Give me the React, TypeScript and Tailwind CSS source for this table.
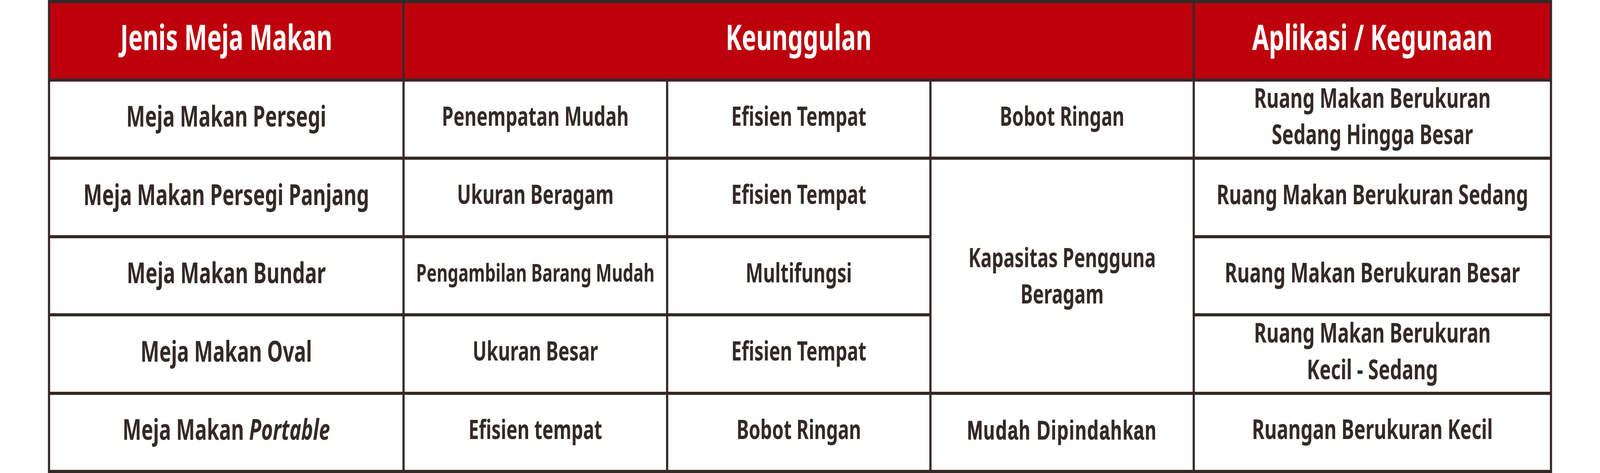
import React, { useEffect, useState } from "react";

const DESIGN_W = 5876;

const cell =
  "bg-white flex items-center justify-center text-center text-[#332a28] font-bold leading-[1.33] pb-[18px]";
const head =
  "bg-[#bd000b] flex items-center justify-center text-center text-white font-bold text-[89px] leading-none pb-[23px]";

function useFitScale() {
  const read = () => (typeof window !== "undefined" ? window.innerWidth / DESIGN_W : 1);
  const [s, setS] = useState(read);
  useEffect(() => {
    const f = () => setS(read());
    f();
    window.addEventListener("resize", f);
    return () => window.removeEventListener("resize", f);
  }, []);
  return s;
}

export default function App() {
  const sx = useFitScale();
  return (
    <div className="w-full h-[1211px] overflow-hidden bg-white">
      <div
        className="w-[5876px] h-[1211px] bg-white origin-top-left"
        style={{ transform: `scaleX(${sx})`, fontFamily: '"Noto Sans", "Open Sans", sans-serif' }}
      >
        <div className="mx-auto w-[5524px] h-[1211px] bg-[#332a28] p-[8px] grid gap-[8px] grid-cols-[1294px_960px_959px_959px_1304px] grid-rows-[193px_192px_193px_192px_193px_192px]">
          {/* header */}
          <div className={`${head} col-start-1 row-start-1`}>Jenis Meja Makan</div>
          <div className={`${head} col-start-2 col-span-3 row-start-1`}>Keunggulan</div>
          <div className={`${head} col-start-5 row-start-1`}>Aplikasi / Kegunaan</div>

          {/* row 1 */}
          <div className={`${cell} text-[73px] col-start-1 row-start-2`}>Meja Makan Persegi</div>
          <div className={`${cell} text-[68px] col-start-2 row-start-2`}>Penempatan Mudah</div>
          <div className={`${cell} text-[68px] col-start-3 row-start-2`}>Efisien Tempat</div>
          <div className={`${cell} text-[68px] col-start-4 row-start-2`}>Bobot Ringan</div>
          <div className={`${cell} text-[70px] col-start-5 row-start-2`}>
            <span>
              Ruang Makan Berukuran
              <br />
              Sedang Hingga Besar
            </span>
          </div>

          {/* row 2 */}
          <div className={`${cell} text-[73px] col-start-1 row-start-3`}>Meja Makan Persegi Panjang</div>
          <div className={`${cell} text-[68px] col-start-2 row-start-3`}>Ukuran Beragam</div>
          <div className={`${cell} text-[68px] col-start-3 row-start-3`}>Efisien Tempat</div>
          <div className="bg-white flex items-center justify-center text-center text-[#332a28] font-bold leading-[1.37] text-[68px] pb-[4px] col-start-4 row-start-3 row-span-3">
            <span>
              Kapasitas Pengguna
              <br />
              Beragam
            </span>
          </div>
          <div className={`${cell} text-[70px] col-start-5 row-start-3`}>Ruang Makan Berukuran Sedang</div>

          {/* row 3 */}
          <div className={`${cell} text-[73px] col-start-1 row-start-4`}>Meja Makan Bundar</div>
          <div className={`${cell} text-[62px] pb-[16px] col-start-2 row-start-4`}>Pengambilan Barang Mudah</div>
          <div className={`${cell} text-[68px] col-start-3 row-start-4`}>Multifungsi</div>
          <div className={`${cell} text-[70px] col-start-5 row-start-4`}>Ruang Makan Berukuran Besar</div>

          {/* row 4 */}
          <div className={`${cell} text-[73px] col-start-1 row-start-5`}>Meja Makan Oval</div>
          <div className={`${cell} text-[68px] col-start-2 row-start-5`}>Ukuran Besar</div>
          <div className={`${cell} text-[68px] col-start-3 row-start-5`}>Efisien Tempat</div>
          <div className={`${cell} text-[70px] col-start-5 row-start-5`}>
            <span>
              Ruang Makan Berukuran
              <br />
              Kecil - Sedang
            </span>
          </div>

          {/* row 5 */}
          <div className={`${cell} text-[73px] col-start-1 row-start-6`}>
            <span>
              Meja Makan <i>Portable</i>
            </span>
          </div>
          <div className={`${cell} text-[68px] col-start-2 row-start-6`}>Efisien tempat</div>
          <div className={`${cell} text-[68px] col-start-3 row-start-6`}>Bobot Ringan</div>
          <div
            className="bg-white flex items-center justify-center text-center text-[#332a28] font-bold leading-[1.33] text-[68px] tracking-[3px] pb-[12px] [-webkit-text-stroke:1.2px_#332a28] col-start-4 row-start-6"
            style={{ fontFamily: '"Liberation Sans", Arial, sans-serif' }}
          >
            Mudah Dipindahkan
          </div>
          <div className={`${cell} text-[70px] col-start-5 row-start-6`}>Ruangan Berukuran Kecil</div>
        </div>
      </div>
    </div>
  );
}
